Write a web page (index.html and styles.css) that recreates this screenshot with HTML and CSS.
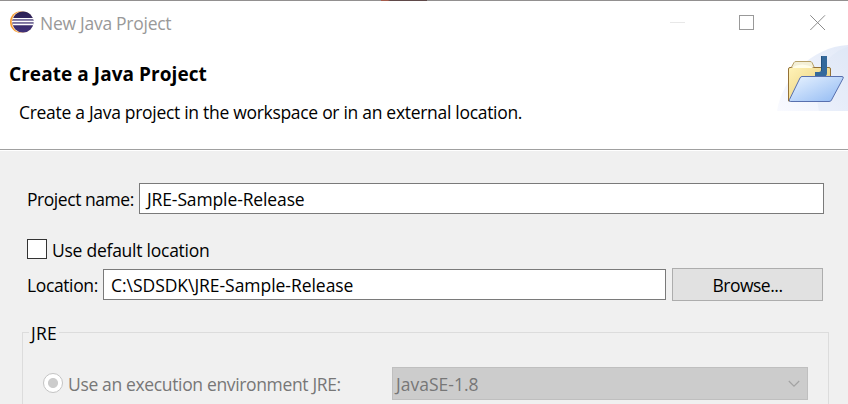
FILE: index.html
```
<!DOCTYPE html>
<html lang="en">
<head>
<meta charset="utf-8">
<title>New Java Project</title>
<link rel="stylesheet" href="styles.css">
</head>
<body>
<div class="window">
  <div class="edge"><span class="edge-mark"></span></div>
  <header class="banner">
    <div class="titlebar">
      <svg class="logo" width="26" height="24" viewBox="0 0 26 24">
        <defs><linearGradient id="orb" x1="0" y1="0" x2="0" y2="1"><stop offset="0" stop-color="#2b2052"/><stop offset="1" stop-color="#40327a"/></linearGradient></defs>
        <circle cx="12.800" cy="12" r="10.800" fill="#f79a2c"/>
        <circle cx="14.400" cy="12" r="10.800" fill="#fde3c4"/>
        <circle cx="15" cy="12" r="10.600" fill="url(#orb)"/>
        <path d="M5 8.700H25M4 11.700H26M5 14.700H25" stroke="#fff" stroke-width="1.300"/>
        <path d="M5 10.200H25.300M5 13.200H25.300" stroke="#8d86ad" stroke-width="1.400"/>
      </svg>
      <span class="title t-title">New Java Project</span>
      <svg class="controls" width="157" height="17" viewBox="0 0 157 17" fill="none">
        <path d="M0 8.5H15" stroke="#e8e8e8"/>
        <rect x="69.5" y="1.5" width="14" height="14" stroke="#999"/>
        <path d="M140.3 1.3L155 16M155 1.3L140.3 16" stroke="#8c8c8c"/>
      </svg>
    </div>
    <h1 class="heading">Create a Java Project</h1>
    <p class="desc">Create a Java project in the workspace or in an external location.</p>
    <svg class="art" width="71" height="66" viewBox="0 0 71 66">
      <defs>
        <linearGradient id="haze" x1="0" y1="1" x2="1" y2="0"><stop offset="0" stop-color="#f9faff"/><stop offset="1" stop-color="#e3eaf8"/></linearGradient>
        <linearGradient id="fold" x1="0" y1="0" x2="1" y2="1"><stop offset="0" stop-color="#fff3b8"/><stop offset="1" stop-color="#e5c76e"/></linearGradient>
        <linearGradient id="flap" x1="0" y1="0" x2="1" y2="1"><stop offset="0" stop-color="#eaf4ff"/><stop offset="1" stop-color="#90b9f3"/></linearGradient>
      </defs>
      <path d="M0 66C5 34 34 2 71 0V66Z" fill="url(#haze)"/>
      <path d="M38 42C42 23 52 8 71 2V66H42Z" fill="#d5e0f4" opacity=".25"/>
      <path d="M13.500 24L17 17.500Q17.500 16.500 19 16.500H33Q34.500 16.500 35 17.500L38 24Z" fill="#f4f0d7" stroke="#b7a168"/>
      <path d="M11.500 56V24Q11.500 22.500 13 22.500H37H52Q53.500 22.500 53.500 24V34L46 56Z" fill="url(#fold)" stroke="#947136"/>
      <path d="M14 23Q25 16 37 23Z" fill="#fffde9"/>
      <path d="M44 11H50V28Q50 32 46 32H38V27H42Q44 27 44 25Z" fill="#34699b"/>
      <path d="M44.500 11V26" stroke="#24527f"/>
      <path d="M25 31.500H65Q67 31.500 66 33.500L54.500 55Q54 56.500 52 56.500H13.500Q11.500 56.500 12.500 54.500L23 33Q23.800 31.500 25 31.500Z" fill="url(#flap)" stroke="#5870ae"/>
    </svg>
  </header>
  <main class="page">
    <div class="row name-row">
      <label class="t-name">Project name:</label>
      <div class="field"><span class="t-value">JRE-Sample-Release</span></div>
    </div>
    <div class="row check-row"><span class="check"></span><span class="t-default">Use default location</span></div>
    <div class="row location-row">
      <label class="t-location">Location:</label>
      <div class="field"><span class="t-path">C:\SDSDK\JRE-Sample-Release</span></div>
      <div class="button"><span class="t-browse">Browse...</span></div>
    </div>
    <section class="group">
      <div class="legend"><span class="t-jre">JRE</span></div>
      <div class="row option-row">
        <span class="radio"></span><span class="t-option">Use an execution environment JRE:</span>
        <div class="combo"><span class="t-combo">JavaSE-1.8</span>
          <svg width="12" height="8" viewBox="0 0 12 8" fill="none"><path d="M.8 1L6 6.200 11.200 1" stroke="#a3a3a3" stroke-width="1.200"/></svg>
        </div>
      </div>
    </section>
  </main>
</div>
</body>
</html>
```
FILE: styles.css
```
* { box-sizing: border-box; }
body { margin: 0; width: 848px; height: 404px; overflow: hidden; font: 17.5px/24px "Open Sans", "Noto Sans", sans-serif; color: #000; background: #f0f0f0; }
span, label, h1, p { white-space: nowrap; }
.window { height: 404px; overflow: hidden; display: flex; flex-direction: column; }
.edge { height: 1px; background: #929090; display: flex; flex: none; }
.edge-mark { width: 46px; margin-left: 381px; background: linear-gradient(90deg, #a45c4c 15%, #5f4949 20%); }
.banner { position: relative; height: 149px; flex: none; background: #fff; border-bottom: 1px solid #a0a0a0; }
.titlebar { height: 44px; display: flex; align-items: center; padding: 0 21px 0 8px; color: #999; }
.logo { flex: none; margin-top: -2px; }
.title { margin-left: 6px; }
.controls { margin-left: auto; margin-top: -1px; }
.heading { margin: 17px 0 0 9px; font-size: 19px; line-height: 24px; font-weight: 700; letter-spacing: .06px; }
.desc { margin: 14px 0 0 19px; letter-spacing: -.3px; }
.art { position: absolute; right: 0; top: 44px; }
.page { flex: 1; padding: 32px 19px 0 22px; border-top: 1px solid #fff; }
.row { display: flex; align-items: center; padding-left: 5px; }
.field { height: 31px; flex: 1; background: #fff; border: 1px solid #7a7a7a; padding: 3px 7px; line-height: 24px; }
.name-row { height: 31px; padding-right: 5px; }
.name-row label { width: 112px; }
.check-row { height: 24px; margin-top: 24px; }
.check { width: 20px; height: 20px; margin: -3px 5px 0 0; border: 1px solid #333; background: #fff; }
.location-row { height: 33px; margin-top: 6px; padding-right: 6px; }
.location-row label { width: 76px; }
.button { width: 151px; height: 33px; margin-left: 6px; border: 1px solid #adadad; background: #e1e1e1; display: flex; align-items: center; justify-content: center; }
.group { position: relative; height: 100px; margin-top: 31px; border: 1px solid #dcdcdc; }
.legend { position: absolute; left: 6px; top: -12px; width: 30px; padding-left: 2px; background: #f0f0f0; }
.option-row { height: 33px; margin-top: 34px; padding: 0 20px; color: #777; }
.radio { width: 20px; height: 20px; margin: -2px 5px 0 0; border: 1px solid #c4c4c4; border-radius: 50%; background: radial-gradient(circle, #ccc 4.6px, #fff 5.4px); }
.combo { width: 416px; height: 33px; margin-left: auto; border: 1px solid #bfbfbf; background: #ccc; padding: 0 7px 0 3px; display: flex; align-items: center; justify-content: space-between; }
.t-title { letter-spacing: -.27px; }
.t-name { letter-spacing: -.45px; }
.t-value { letter-spacing: -.12px; }
.t-default { letter-spacing: -.25px; }
.t-location { letter-spacing: -.38px; }
.t-path { letter-spacing: -.04px; }
.t-browse { letter-spacing: -.5px; }
.t-jre { letter-spacing: .3px; }
.t-option { letter-spacing: -.35px; }
.t-combo { letter-spacing: .02px; }
```
